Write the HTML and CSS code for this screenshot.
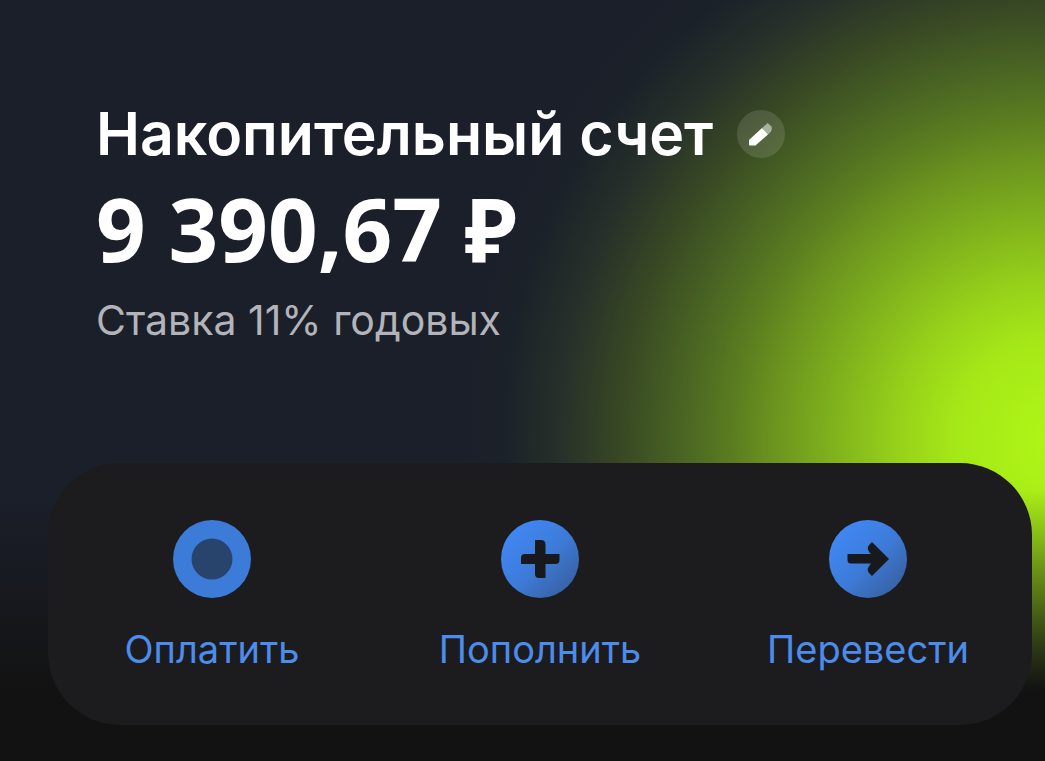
FILE: index.html
```html
<!DOCTYPE html>
<html lang="ru">
<head>
<meta charset="utf-8">
<meta name="viewport" content="width=device-width, initial-scale=1">
<title>Накопительный счет</title>
<link rel="stylesheet" href="styles.css">
</head>
<body>
<main class="account">
  <header class="summary">
    <div class="title-row">
      <h1 class="title">Накопительный счет</h1>
      <button class="edit" type="button" aria-label="Изменить название">
        <svg viewBox="0 0 48 48" aria-hidden="true">
          <path fill="#fff" d="M12 30 25 18 31 24.500 18.500 35.500H13Q12 35.500 12 34.500Z"/>
          <path fill="#fff" fill-opacity=".5" d="M25 18 30.700 13 34.500 16.500Q35.600 19.500 34 21.500L31 24.500Z"/>
        </svg>
      </button>
    </div>
    <p class="amount">9 390,67 ₽</p>
    <p class="rate">Ставка 11% годовых</p>
  </header>
  <nav class="actions" aria-label="Операции">
    <button class="action" type="button">
      <svg class="icon" viewBox="0 0 78 78" aria-hidden="true">
        <circle cx="39" cy="39" r="39" fill="#3d7bd9"/>
        <circle cx="39" cy="39" r="20.500" fill="#29446c"/>
      </svg>
      <span>Оплатить</span>
    </button>
    <button class="action" type="button">
      <svg class="icon" viewBox="0 0 78 78" aria-hidden="true">
        <defs>
          <linearGradient id="blue" x1=".15" y1=".15" x2=".88" y2=".88">
            <stop offset="0" stop-color="#4087f2"/>
            <stop offset=".5" stop-color="#3d7bd9"/>
            <stop offset="1" stop-color="#3862a4"/>
          </linearGradient>
        </defs>
        <circle cx="39" cy="39" r="39" fill="url(#blue)"/>
        <path fill="#17191d" d="M34 20H40Q44.500 20 44.500 24.500V34H58.500V40Q58.500 44 54.500 44H44.500V58H38Q34 58 34 54V44H20V38Q20 34 24 34H34Z"/>
      </svg>
      <span>Пополнить</span>
    </button>
    <button class="action" type="button">
      <svg class="icon" viewBox="0 0 78 78" aria-hidden="true">
        <circle cx="39" cy="39" r="39" fill="url(#blue)"/>
        <path fill="#17191d" d="M18.500 34H42L40.500 32.500Q37 28 40.500 24.500L43 22 60 39 43 56 40.500 53.500Q37 50 40.500 45.500L42 43.500H22Q18.500 43.500 18.500 40Z"/>
      </svg>
      <span>Перевести</span>
    </button>
  </nav>
</main>
</body>
</html>
```
FILE: styles.css
```css
* {
  box-sizing: border-box;
}

body {
  margin: 0;
  background: #111;
  font-family: Inter, "Noto Sans", sans-serif;
}

h1,
p {
  margin: 0;
}

button {
  padding: 0;
  border: 0;
  background: none;
  color: inherit;
  font: inherit;
  cursor: pointer;
}

.account {
  min-height: 100vh;
  padding: 96px 13px 36px 48px;
  background:
    linear-gradient(rgba(18, 18, 18, 0) 490px, rgba(18, 18, 18, 0.5) 600px, #121212 690px),
    radial-gradient(circle 590px at calc(100% + 10px) 440px,
      #b0f616 0,
      #a5e818 100px,
      #96d01a 160px,
      #84b81c 210px,
      #6a921f 285px,
      #5c7e20 320px,
      #496423 375px,
      #384824 435px,
      #27302a 495px,
      #1c2229 550px,
      #1b1f2a 590px);
}

.summary {
  padding-left: 48px;
  color: #fff;
}

.title-row {
  display: flex;
  align-items: center;
  gap: 24px;
}

.title {
  font-size: 59px;
  font-weight: 600;
  line-height: 76px;
}

.edit {
  flex: none;
  width: 48px;
  height: 48px;
  border-radius: 50%;
  background: rgba(255, 255, 255, 0.12);
}

.edit svg,
.icon {
  display: block;
}

.amount {
  font-family: "Noto Sans", sans-serif;
  font-size: 87px;
  font-weight: 700;
  line-height: 112px;
}

.rate {
  margin-top: 4px;
  color: #b3b4b9;
  font-size: 41px;
  line-height: 64px;
}

.actions {
  display: grid;
  grid-template-columns: repeat(3, 1fr);
  margin-top: 111px;
  padding: 57px 0 49px;
  border-radius: 72px;
  background: #1c1c1e;
}

.action {
  display: flex;
  flex-direction: column;
  align-items: center;
  gap: 24px;
  color: #4c8cec;
  font-size: 38px;
  line-height: 54px;
}

.icon {
  width: 78px;
  height: 78px;
}
```
